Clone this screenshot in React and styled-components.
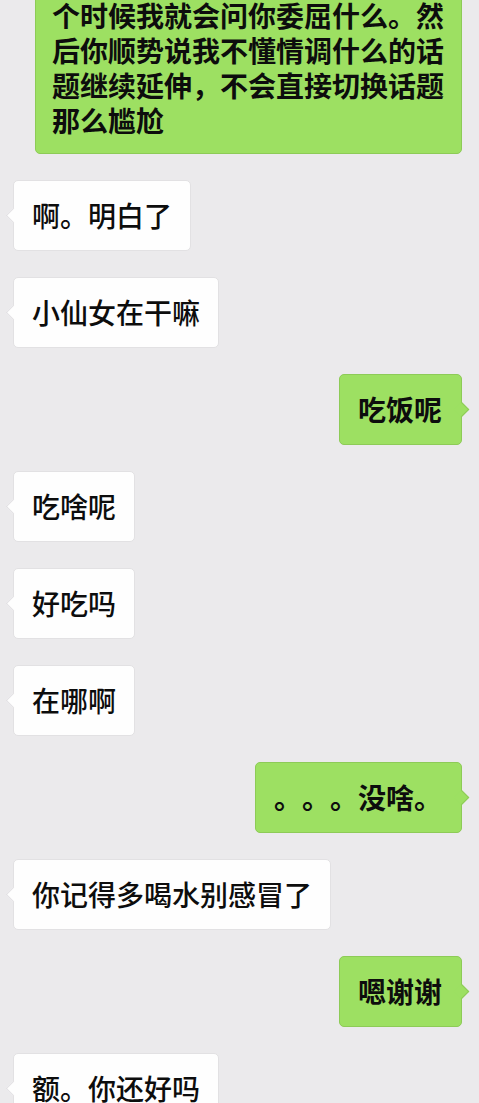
import React from "react";
import styled, { createGlobalStyle, css } from "styled-components";

const GlobalStyle = createGlobalStyle`
  html, body {
    margin: 0;
    padding: 0;
    background: #ebeaec;
  }
  body {
    font-family: "Noto Sans CJK SC", "Noto Sans", sans-serif;
    overflow: hidden;
  }
`;

const Page = styled.div`
  width: 479px;
  height: 1103px;
  overflow: hidden;
  box-sizing: border-box;
  padding: 0 17px 0 13px;
  display: flex;
  flex-direction: column;
  gap: 26px;
`;

const Row = styled.div`
  display: flex;
  justify-content: ${(p) => (p.$mine ? "flex-end" : "flex-start")};
  margin-top: ${(p) => p.$offset || 0}px;
`;

const Bubble = styled.div`
  position: relative;
  box-sizing: border-box;
  padding: 17px 18px;
  border-radius: 5px;
  font-size: 28px;
  line-height: 35px;
  color: #0d0d0d;
  white-space: nowrap;
  text-spacing-trim: space-all;

  &::before {
    content: "";
    position: absolute;
    top: 29px;
    width: 10px;
    height: 10px;
    transform: rotate(45deg);
  }

  ${(p) =>
    p.$mine
      ? css`
          background: #9de062;
          border: 1px solid #8dcb57;
          font-weight: 700;
          padding-right: 19px;
          &::before {
            right: -6px;
            background: #9de062;
            border-top: 1px solid #8dcb57;
            border-right: 1px solid #8dcb57;
          }
        `
      : css`
          background: #fefefe;
          border: 1px solid #e2e1e3;
          font-weight: 500;
          &::before {
            left: -6px;
            background: #fefefe;
            border-bottom: 1px solid #e2e1e3;
            border-left: 1px solid #e2e1e3;
          }
        `}
`;

const LongBubble = styled(Bubble)`
  padding: 17px 17px 15px 16px;
  &::before {
    display: none;
  }
`;

const messages = [
  { mine: false, text: "啊。明白了" },
  { mine: false, text: "小仙女在干嘛" },
  { mine: true, text: "吃饭呢" },
  { mine: false, text: "吃啥呢" },
  { mine: false, text: "好吃吗" },
  { mine: false, text: "在哪啊" },
  { mine: true, text: "。。。没啥。" },
  { mine: false, text: "你记得多喝水别感冒了" },
  { mine: true, text: "嗯谢谢" },
  { mine: false, text: "额。你还好吗" },
];

export default function App() {
  return (
    <>
      <GlobalStyle />
      <Page>
        <Row $mine $offset={-20}>
          <LongBubble $mine>
            个时候我就会问你委屈什么。然
            <br />
            后你顺势说我不懂情调什么的话
            <br />
            题继续延伸，不会直接切换话题
            <br />
            那么尴尬
          </LongBubble>
        </Row>
        {messages.map((m, i) => (
          <Row key={i} $mine={m.mine}>
            <Bubble $mine={m.mine}>{m.text}</Bubble>
          </Row>
        ))}
      </Page>
    </>
  );
}
